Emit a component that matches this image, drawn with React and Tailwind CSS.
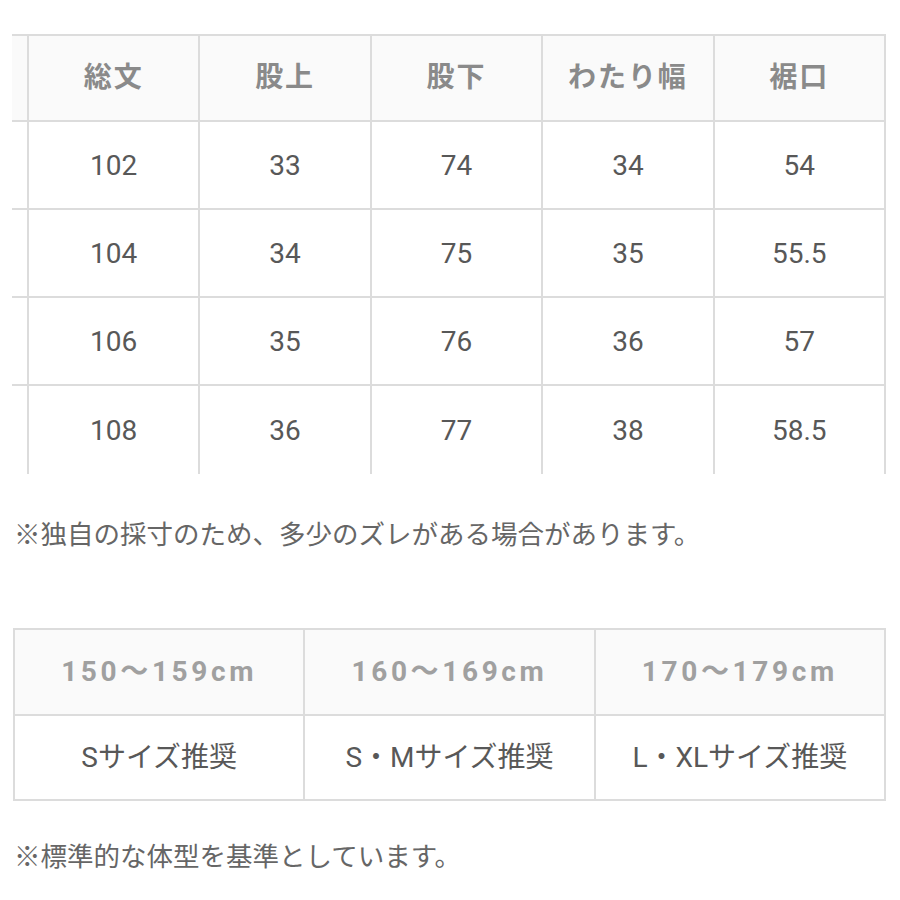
const headers = ['総文', '股上', '股下', 'わたり幅', '裾口'];
const rows = [
  ['102', '33', '74', '34', '54'],
  ['104', '34', '75', '35', '55.5'],
  ['106', '35', '76', '36', '57'],
  ['108', '36', '77', '38', '58.5'],
];

const heights = ['150〜159cm', '160〜169cm', '170〜179cm'];
const sizes = ['Sサイズ推奨', 'S・Mサイズ推奨', 'L・XLサイズ推奨'];

export default function App() {
  return (
    <div className="min-h-[900px] bg-white font-['Roboto','Noto_Sans_CJK_JP',sans-serif] pt-[34px] pb-8">
      {/* Size table, scrolled so the first column is cut off */}
      <div className="ml-[12px] w-[874px] border-t-2 border-[#dcdcdc]">
        <div className="grid grid-cols-[17px_repeat(5,1fr)]">
          <div className="h-[86px] bg-[#fafafa] border-b-2 border-r-2 border-[#dcdcdc]" />
          {headers.map((h) => (
            <div
              key={h}
              className="h-[86px] bg-[#fafafa] border-b-2 border-r-2 border-[#dcdcdc] flex items-center justify-center text-[28px] font-bold text-[#8a8a8a] tracking-[0.07em]"
            >
              {h}
            </div>
          ))}
        </div>
        {rows.map((row, i) => {
          const last = i === rows.length - 1;
          return (
            <div key={i} className="grid grid-cols-[17px_repeat(5,1fr)]">
              <div
                className={`h-[88px] border-r-2 border-[#dcdcdc] ${last ? '' : 'border-b-2'}`}
              />
              {row.map((v, j) => (
                <div
                  key={j}
                  className={`h-[88px] pt-[2px] border-r-2 border-[#dcdcdc] flex items-center justify-center text-[28px] text-[#585858] ${last ? '' : 'border-b-2'}`}
                >
                  {v}
                </div>
              ))}
            </div>
          );
        })}
      </div>

      <p className="mt-[43px] ml-[14px] text-[26.5px] leading-[36px] text-[#666666]">
        ※独自の採寸のため、多少のズレがある場合があります。
      </p>

      {/* Recommended size by height */}
      <div className="mt-[75px] ml-[13px] w-[873px] border-t-2 border-l-2 border-[#dcdcdc]">
        <div className="grid grid-cols-3">
          {heights.map((h) => (
            <div
              key={h}
              className="h-[86px] bg-[#fafafa] border-b-2 border-r-2 border-[#dcdcdc] flex items-center justify-center text-[28px] font-bold text-[#a0a0a0] tracking-[0.13em]"
            >
              {h}
            </div>
          ))}
        </div>
        <div className="grid grid-cols-3">
          {sizes.map((s) => (
            <div
              key={s}
              className="h-[85px] border-b-2 border-r-2 border-[#dcdcdc] flex items-center justify-center text-[28px] text-[#585858]"
            >
              {s}
            </div>
          ))}
        </div>
      </div>

      <p className="mt-[38px] ml-[14px] text-[26.5px] leading-[36px] text-[#666666]">
        ※標準的な体型を基準としています。
      </p>
    </div>
  );
}
